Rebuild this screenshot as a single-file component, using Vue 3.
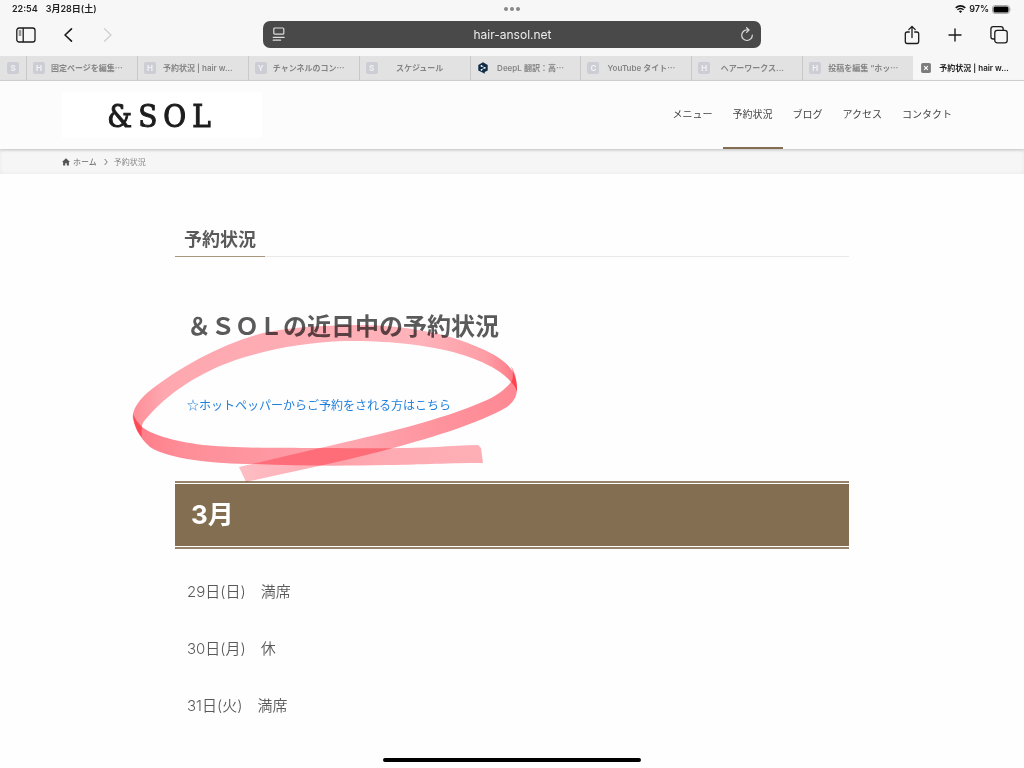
<template>
  <div class="screen">
    <header class="browser">
      <div class="status-bar">
        <div class="status-time">
          <span>22:54</span>
          <span>3月28日(土)</span>
        </div>
        <div class="status-dots"><i></i><i></i><i></i></div>
        <div class="status-battery">
          <svg width="11" height="8" viewBox="0 0 11 8" fill="none" stroke="#111" stroke-width="1.5">
            <path d="M0.7 2.9Q5.5 -1.2 10.3 2.9" />
            <path d="M2.4 4.8Q5.5 2.2 8.6 4.8" />
            <path d="M5.5 7.9L3.9 6.2Q5.5 5 7.1 6.2Z" fill="#111" stroke="none" />
          </svg>
          <span>97%</span>
          <svg width="20" height="9" viewBox="0 0 20 9">
            <rect x="0.5" y="0.5" width="17" height="8" rx="2.5" fill="none" stroke="#aaa" />
            <rect x="1.5" y="1.5" width="15" height="6" rx="1.5" fill="#000" />
            <path d="M18.5 3Q20 4.5 18.5 6Z" fill="#aaa" />
          </svg>
        </div>
      </div>

      <div class="toolbar">
        <div class="tool-group">
          <button type="button" class="tool" aria-label="サイドバー">
            <svg width="20" height="16" viewBox="0 0 20 16" fill="none" stroke="#1b1b1b" stroke-width="1.3">
              <rect x="0.8" y="1" width="18.2" height="14" rx="2.3" />
              <path d="M7.2 1V15" />
              <path d="M2.7 4H5.3M2.7 6H5.3M2.7 8H5.3" stroke-width="0.9" />
            </svg>
          </button>
          <button type="button" class="tool" aria-label="戻る">
            <svg width="20" height="16" viewBox="0 0 20 16" fill="none" stroke="#1b1b1b" stroke-width="1.6" stroke-linecap="round" stroke-linejoin="round">
              <path d="M15.5 1.8L9 8L15.5 14.2" />
            </svg>
          </button>
          <button type="button" class="tool" aria-label="進む" disabled>
            <svg width="20" height="16" viewBox="0 0 20 16" fill="none" stroke="#d0d0d0" stroke-width="1.3" stroke-linecap="round" stroke-linejoin="round">
              <path d="M8.5 1.8L15 8L8.5 14.2" />
            </svg>
          </button>
        </div>

        <div class="address">
          <button type="button" class="address-btn" aria-label="ページ設定">
            <svg width="13" height="15" viewBox="0 0 13 15" fill="none" stroke="#ddd" stroke-width="1.2" stroke-linecap="round">
              <rect x="1.8" y="1" width="10" height="6.2" rx="1" />
              <path d="M1.2 10.3H12.2M1.2 13.2H8.6" />
            </svg>
          </button>
          <input v-model="address" type="text" class="address-input" aria-label="アドレス" />
          <button type="button" class="address-btn" aria-label="再読み込み">
            <svg width="13" height="15" viewBox="0 0 13 15" fill="none" stroke="#ddd" stroke-width="1.2" stroke-linecap="round" stroke-linejoin="round">
              <path d="M12.3 8.2A5.3 5.3 0 1 1 7 2.9H8.6" />
              <path d="M6.6 0.7L9 3L6.6 5.4" />
            </svg>
          </button>
        </div>

        <div class="tool-group tool-group-end">
          <button type="button" class="tool" aria-label="共有">
            <svg width="16" height="20" viewBox="0 0 16 20" fill="none" stroke="#1b1b1b" stroke-width="1.3" stroke-linecap="round" stroke-linejoin="round">
              <path d="M5.3 7H3.2Q1.3 7 1.3 8.9V16.6Q1.3 18.5 3.2 18.5H12.8Q14.7 18.5 14.7 16.6V8.9Q14.7 7 12.8 7H10.7" />
              <path d="M8 12.6V1.6M4.8 4.6L8 1.4L11.2 4.6" />
            </svg>
          </button>
          <button type="button" class="tool" aria-label="新規タブ">
            <svg width="14" height="20" viewBox="0 0 14 20" fill="none" stroke="#1b1b1b" stroke-width="1.4" stroke-linecap="round">
              <path d="M7 4V16M1 10H13" />
            </svg>
          </button>
          <button type="button" class="tool" aria-label="タブ一覧">
            <svg width="18" height="20" viewBox="0 0 18 20" fill="none" stroke="#1b1b1b" stroke-width="1.3">
              <rect x="4.8" y="5.4" width="12.4" height="12.4" rx="2.4" />
              <path d="M4.8 14H3.2Q0.9 14 0.9 11.7V4Q0.9 1.7 3.2 1.7H10.8Q13.2 1.7 13.2 4V5.4" />
            </svg>
          </button>
        </div>
      </div>

      <nav class="tabs">
        <button
          v-for="(tab, index) in tabs"
          :key="index"
          type="button"
          class="tab"
          :class="{ 'tab-pinned': !tab.title, 'tab-active': index === activeTab }"
          :aria-label="tab.title || tab.letter"
          @click="activeTab = index"
        >
          <svg v-if="index === activeTab" class="tab-icon" width="11" height="11" viewBox="0 0 11 11">
            <rect x="1" y="1" width="9" height="9" rx="1.5" fill="#7c7c7c" />
            <path d="M3.8 3.8L7.2 7.2M7.2 3.8L3.8 7.2" stroke="#fff" stroke-width="1" />
          </svg>
          <svg v-else-if="tab.letter === 'deepl'" class="tab-icon" width="11" height="12" viewBox="0 0 11 12">
            <path d="M5.5 0.3L10.2 3V8.4L7.2 10.1V11.8L5 10.6L0.8 8.4V3Z" fill="#0f2b46" />
            <path d="M4 4L7.3 5.8L4 7.8" fill="none" stroke="#fff" stroke-width="0.6" />
            <circle cx="4" cy="3.9" r="0.9" fill="#fff" />
            <circle cx="7.3" cy="5.8" r="0.9" fill="#fff" />
            <circle cx="4" cy="7.8" r="0.9" fill="#fff" />
          </svg>
          <span v-else class="tab-icon tab-letter">{{ tab.letter }}</span>
          <span v-if="tab.title" class="tab-title">{{ tab.title }}</span>
        </button>
      </nav>
    </header>

    <div class="site-header">
      <div class="container site-header-inner">
        <a href="#" class="logo">&amp;SOL</a>
        <nav class="menu">
          <a
            v-for="item in menu"
            :key="item"
            href="#"
            class="menu-link"
            :class="{ 'menu-current': item === '予約状況' }"
          >{{ item }}</a>
        </nav>
      </div>
    </div>

    <div class="breadcrumb">
      <div class="container breadcrumb-inner">
        <svg width="8" height="8" viewBox="0 0 8 8" fill="#555">
          <path d="M4 0.2L8 4H6.9V7.6H4.8V5.2H3.2V7.6H1.1V4H0Z" />
        </svg>
        <a href="#" class="breadcrumb-home">ホーム</a>
        <svg width="4" height="8" viewBox="0 0 4 8" fill="none" stroke="#777" stroke-width="1">
          <path d="M0.7 1L3.2 4L0.7 7" />
        </svg>
        <span class="breadcrumb-current">予約状況</span>
      </div>
    </div>

    <main class="article">
      <h1 class="page-title"><span>予約状況</span></h1>
      <h2 class="lead">＆ＳＯＬの近日中の予約状況</h2>
      <p class="booking"><a href="#">☆ホットペッパーからご予約をされる方はこちら</a></p>

      <h2 class="month">3月</h2>
      <p v-for="day in days" :key="day.date" class="day">{{ day.date }}　{{ day.state }}</p>

      <svg class="marker" width="392" height="168" viewBox="130 320 392 168">
        <defs>
          <linearGradient id="loop" x1="133" y1="0" x2="517" y2="0" gradientUnits="userSpaceOnUse">
            <stop offset="0" stop-color="#ff8f99" />
            <stop offset="0.08" stop-color="#ffa8b0" />
            <stop offset="0.75" stop-color="#ffb4bb" />
            <stop offset="0.92" stop-color="#ff9ea7" />
            <stop offset="1" stop-color="#ff7985" />
          </linearGradient>
          <linearGradient id="rise" x1="240" y1="0" x2="517" y2="0" gradientUnits="userSpaceOnUse">
            <stop offset="0" stop-color="#ffbec5" />
            <stop offset="0.35" stop-color="#ffabb3" />
            <stop offset="0.7" stop-color="#ff959f" />
            <stop offset="1" stop-color="#ff8994" />
          </linearGradient>
          <linearGradient id="base" x1="133" y1="0" x2="483" y2="0" gradientUnits="userSpaceOnUse">
            <stop offset="0" stop-color="#ff7d89" />
            <stop offset="0.15" stop-color="#ff8f99" />
            <stop offset="0.4" stop-color="#ff99a3" />
            <stop offset="0.75" stop-color="#ffacb4" />
            <stop offset="1" stop-color="#ffb0b7" />
          </linearGradient>
        </defs>
        <path
          fill="url(#loop)"
          d="M517 392C518 372 508 360 480 348C445 332 405 326 363 325C330 325 290 327 263 333C224 343 180 366 147 393C134 405 132 414 133 419C135 428 138 433 142 437C141 432 142 429 142 427C142 422 146 419 153 411C180 383 215 366 245 357C275 348 310 342 345 341C390 341 420 344 453 352C485 361 503 372 511 382C514 385 516 388 517 392Z"
        />
        <path
          fill="url(#rise)"
          d="M239 467L246 482C300 470 350 460 397 447C430 438 480 423 507 407C518 399 518 390 516 379C515 373 513 369 511 366C514 374 513 380 511 382C506 389 496 396 487 400C440 421 380 434 320 448Z"
        />
        <path
          fill="url(#base)"
          d="M133 414C134 426 138 436 150 447C168 459 215 464 253 464C300 466 345 466 387 465C415 465 440 463 483 463L481 448L478 445C465 445 450 446 437 447C400 449 350 448 320 448C270 448 235 448 203 445C172 441 151 434 142 427C138 423 135 419 133 414Z"
        />
      </svg>
    </main>

    <div class="home-indicator"></div>
  </div>
</template>

<script setup>
import { ref } from 'vue';

const address = ref('hair-ansol.net');
const activeTab = ref(9);

const tabs = [
  { letter: 'S', title: '' },
  { letter: 'H', title: '固定ページを編集⋯' },
  { letter: 'H', title: '予約状況 | hair w...' },
  { letter: 'Y', title: 'チャンネルのコン⋯' },
  { letter: 'S', title: 'スケジュール' },
  { letter: 'deepl', title: 'DeepL 翻訳：高⋯' },
  { letter: 'C', title: 'YouTube タイト⋯' },
  { letter: 'H', title: 'ヘアーワークス...' },
  { letter: 'H', title: '投稿を編集 “ホッ⋯' },
  { letter: 'H', title: '予約状況 | hair w...' }
];

const menu = ['メニュー', '予約状況', 'ブログ', 'アクセス', 'コンタクト'];

const days = [
  { date: '29日(日)', state: '満席' },
  { date: '30日(月)', state: '休' },
  { date: '31日(火)', state: '満席' }
];
</script>

<style>
body {
  margin: 0;
  background: #fefefe;
}
</style>

<style scoped>
.screen {
  position: relative;
  min-height: 100vh;
  overflow: hidden;
  font-family: "Noto Sans CJK JP", sans-serif;
  color: #5a5a5a;
}

a {
  color: inherit;
  text-decoration: none;
}

button {
  padding: 0;
  border: 0;
  background: none;
  font: inherit;
  color: inherit;
}

svg {
  display: block;
  flex: none;
}

.browser {
  background: #f7f7f7;
  border-bottom: 1px solid #d4d4d4;
  font-family: Inter, "Noto Sans CJK JP", sans-serif;
}

/* Status bar */
.status-bar {
  display: grid;
  grid-template-columns: 1fr auto 1fr;
  align-items: center;
  height: 18px;
  padding: 0 12px;
  font-size: 9px;
  line-height: 18px;
  font-weight: 600;
  color: #222;
}

.status-time {
  display: flex;
  gap: 8px;
}

.status-dots {
  display: flex;
  gap: 2px;
}

.status-dots i {
  width: 4px;
  height: 4px;
  border-radius: 50%;
  background: #888;
}

.status-battery {
  display: flex;
  align-items: center;
  justify-content: flex-end;
  gap: 3px;
}

/* Toolbar */
.toolbar {
  display: grid;
  grid-template-columns: 1fr 1.9fr 1fr;
  align-items: center;
  height: 38px;
}

.tool-group {
  display: flex;
  align-items: center;
  gap: 20px;
  padding: 0 16px;
  margin-bottom: 4px;
}

.tool-group-end {
  justify-content: flex-end;
  gap: 28px;
}

.address {
  display: flex;
  align-items: center;
  height: 27px;
  margin-bottom: 6px;
  padding: 0 8px 0 9px;
  border-radius: 7px;
  background: #494949;
}

.address-input {
  flex: 1;
  min-width: 0;
  padding: 0;
  border: 0;
  background: none;
  font-family: Inter, sans-serif;
  font-size: 12px;
  text-align: center;
  color: #eee;
  outline: none;
}

/* Tabs */
.tabs {
  display: flex;
  height: 24px;
  background: #e2e2e2;
}

.tab {
  display: flex;
  flex: 1;
  align-items: center;
  min-width: 0;
  padding: 0 8px 0 6px;
  border-left: 1px solid #c9c9c9;
  font-size: 8px;
  line-height: 24px;
  font-weight: 600;
  color: #858585;
}

.tab-pinned {
  flex: none;
  padding: 0 7px;
  border-left: 0;
}

.tab-active {
  background: #f7f7f7;
  border-left-color: #f7f7f7;
  color: #222;
}

.tab-icon {
  flex: none;
  width: 12px;
  height: 12px;
}

.tab-letter {
  border-radius: 2px;
  background: #cdcdd5;
  font-size: 8px;
  line-height: 12px;
  font-weight: 700;
  text-align: center;
  color: #f0f0f3;
}

.tab-title {
  flex: 1;
  overflow: hidden;
  white-space: nowrap;
  text-align: center;
}

/* Site header */
.container {
  display: flex;
  max-width: 900px;
  margin: 0 auto;
}

.site-header {
  position: relative;
  background: #fcfcfc;
  box-shadow: 0 1px 3px rgba(0, 0, 0, 0.2);
}

.site-header-inner {
  align-items: center;
  justify-content: space-between;
  height: 68px;
}

.logo {
  width: 200px;
  padding-top: 3px;
  background: #fff;
  font-family: "DejaVu Serif Condensed", "DejaVu Serif", serif;
  font-size: 31px;
  line-height: 43px;
  letter-spacing: 6px;
  text-align: center;
  color: #1c1c1c;
  -webkit-text-stroke: 1px #1c1c1c;
}

.menu {
  display: flex;
  align-self: stretch;
}

.menu-link {
  padding: 0 10px;
  border-bottom: 2px solid transparent;
  font-size: 10px;
  line-height: 66px;
  color: #444;
}

.menu-current {
  border-bottom-color: #836e52;
}

.breadcrumb {
  background: #f6f6f6;
  box-shadow: inset 0 0 4px rgba(0, 0, 0, 0.06);
}

.breadcrumb-inner {
  align-items: center;
  height: 25px;
  font-size: 8px;
  line-height: 12px;
  color: #888;
}

.breadcrumb-home {
  margin: 0 7px 0 3px;
  color: #666;
}

.breadcrumb-current {
  margin-left: 6px;
}

/* Article */
.article {
  position: relative;
  max-width: 674px;
  margin: 0 auto;
  padding: 48px 0 32px;
}

.article h1,
.article h2,
.article p {
  margin: 0;
}

.page-title {
  display: flex;
  border-bottom: 1px solid #e8e8e8;
  font-size: 18px;
  line-height: 32px;
}

.page-title span {
  margin-bottom: -1px;
  padding: 0 9px 2px;
  border-bottom: 1px solid #a8957c;
}

.lead {
  padding: 50px 12px 0;
  font-size: 24px;
  line-height: 36px;
}

.booking {
  padding: 50px 12px 64px;
  font-size: 12px;
  line-height: 24px;
  color: #1e7fdb;
}

.month {
  padding: 1px 0;
  border-top: 2px solid #958469;
  border-bottom: 2px solid #958469;
  background: #836e52;
  background-clip: content-box;
  font-family: Inter, "Noto Sans CJK JP", sans-serif;
  font-size: 26px;
  line-height: 62px;
  text-indent: 16px;
  color: #fff;
}

.day {
  padding: 29px 12px 0;
  font-family: Inter, "Noto Sans CJK JP", sans-serif;
  font-size: 15px;
  line-height: 28px;
  font-weight: 350;
}

.marker {
  position: absolute;
  top: 146px;
  left: -45px;
  mix-blend-mode: multiply;
  pointer-events: none;
}

.marker path {
  mix-blend-mode: multiply;
}

.home-indicator {
  position: absolute;
  bottom: 6px;
  left: 50%;
  width: 258px;
  height: 4px;
  margin-left: -129px;
  border-radius: 2px;
  background: #000;
}
</style>
